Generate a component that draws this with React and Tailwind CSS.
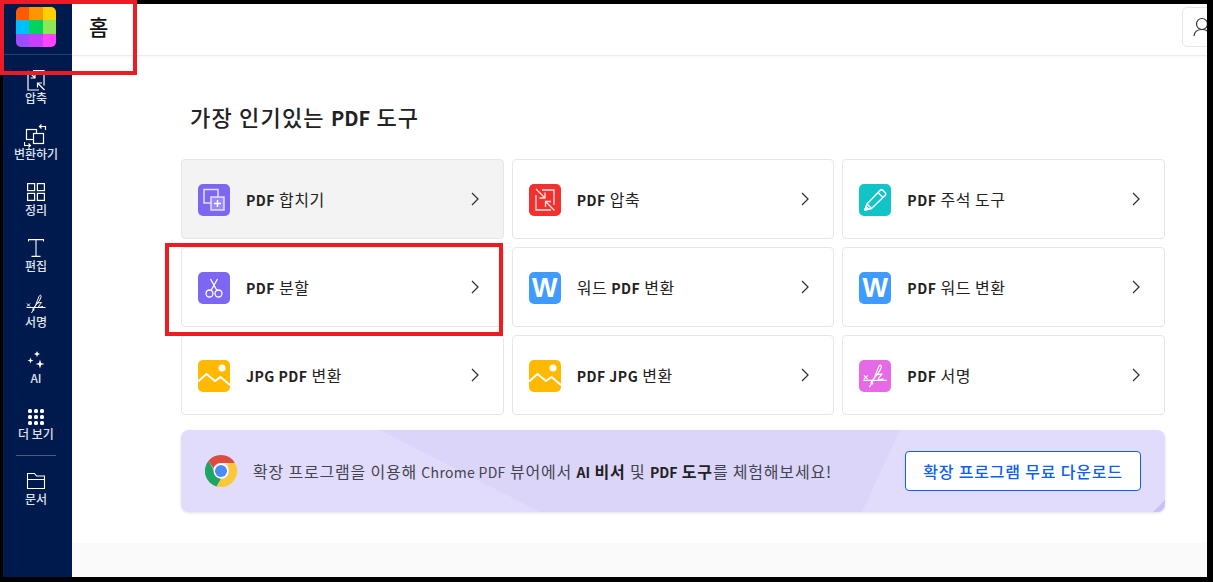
const navItems = [
  { label: "압축", icon: <CompressGlyph /> },
  { label: "변환하기", icon: <ConvertGlyph /> },
  { label: "정리", icon: <OrganizeGlyph /> },
  { label: "편집", icon: <EditGlyph /> },
  { label: "서명", icon: <SignGlyph /> },
  { label: "AI", icon: <SparkleGlyph /> },
  { label: "더 보기", icon: <DotsGlyph /> },
];

const logoColors = [
  "bg-[#ff5a00]", "bg-[#ff9500]", "bg-[#ffd000]",
  "bg-[#00bfff]", "bg-[#00d45f]", "bg-[#8ee655]",
  "bg-[#9b4dff]", "bg-[#c541ff]", "bg-[#ff45ff]",
];

const tools = [
  { title: [["PDF", true], [" 합치기", false]], icon: <MergeIcon />, active: true },
  { title: [["PDF", true], [" 압축", false]], icon: <CompressIcon /> },
  { title: [["PDF", true], [" 주석 도구", false]], icon: <PencilIcon /> },
  { title: [["PDF", true], [" 분할", false]], icon: <ScissorsIcon /> },
  { title: [["워드 ", false], ["PDF", true], [" 변환", false]], icon: <WordIcon /> },
  { title: [["PDF", true], [" 워드 변환", false]], icon: <WordIcon /> },
  { title: [["JPG PDF", true], [" 변환", false]], icon: <ImageIcon /> },
  { title: [["PDF JPG", true], [" 변환", false]], icon: <ImageIcon /> },
  { title: [["PDF", true], [" 서명", false]], icon: <SignIcon /> },
];

function CompressGlyph() {
  return (
    <svg width="24" height="24" viewBox="0 0 24 24" fill="none" stroke="white" strokeWidth="1.2">
      <path d="M9 2.5h11v15M4 7v15h11" />
      <path d="M4 3l7 7M11 5.5V10H6.5M20.5 22l-7-7M13.5 19.5V15H18" />
    </svg>
  );
}

function ConvertGlyph() {
  return (
    <svg width="24" height="26" viewBox="0 0 24 26" fill="none" stroke="white" strokeWidth="1.2">
      <rect x="2.5" y="6.5" width="10" height="10" />
      <rect x="9.5" y="10.5" width="10" height="10" fill="#001a4d" />
      <path d="M21.5 7V3.5H15.5M17.5 1.5l-2 2 2 2M0.5 19v3.5h6M4.5 20.5l2 2-2 2" />
    </svg>
  );
}

function OrganizeGlyph() {
  return (
    <svg width="20" height="20" viewBox="0 0 20 20" fill="none" stroke="white" strokeWidth="1.2">
      <rect x="1.6" y="1.6" width="7" height="7" />
      <rect x="11.4" y="1.6" width="7" height="7" />
      <rect x="1.6" y="11.4" width="7" height="7" />
      <rect x="11.4" y="11.4" width="7" height="7" />
    </svg>
  );
}

function EditGlyph() {
  return (
    <svg width="18" height="20" viewBox="0 0 18 20" fill="none" stroke="white" strokeWidth="1.1">
      <path d="M1.5 3.5V1.6h15v1.9M9 1.6v16.8M4.5 18.4h9" />
    </svg>
  );
}

function SignaturePath({ color }) {
  return (
    <g fill="none" stroke={color} strokeWidth="1">
      <path d="M0.5 13.5h19" />
      <path d="M1 9.5l3 3M4 9.5l-3 3" />
      <path d="M5.5 19C9 14 11 7 13 2.5c1-2 2.5-1.500 2 .5-1 4-5 8-7.500 11-1.500 2-.5 3 1 2" />
      <path d="M10.500 9c1.800 0 3.500-.5 5-.5-1 1.500-3 3.500-3 4.500 1.200.5 3-.3 4.500-.7" />
    </g>
  );
}

function SignGlyph() {
  return (
    <svg width="20" height="20" viewBox="0 0 20 20">
      <SignaturePath color="white" />
    </svg>
  );
}

function SparkleGlyph() {
  return (
    <svg width="18" height="20" viewBox="0 0 18 20" fill="white">
      <path d="M10 1l.9 2.100L13 4l-2.100.9L10 7l-.9-2.100L7 4l2.100-.9zM3.500 7.500l.8 2.200 2.200.8-2.200.8-.8 2.200-.8-2.200L.5 10.500l2.200-.8zM13 9.500l1.100 3.400 3.400 1.100-3.400 1.100L13 18.500l-1.100-3.400L8.500 14l3.400-1.100z" />
    </svg>
  );
}

function DotsGlyph() {
  return (
    <div className="mt-[2px] grid grid-cols-3 gap-[2px]">
      {[...Array(9).keys()].map((n) => (
        <span key={n} className="size-1 rounded-[1.5px] bg-white" />
      ))}
    </div>
  );
}

function FolderGlyph() {
  return (
    <svg width="20" height="18" viewBox="0 0 20 18" fill="none" stroke="white" strokeWidth="1.1">
      <path d="M1.5 16.500V1.500h7l2 2.500h8v12.500zM1.500 7.500h17" />
    </svg>
  );
}

function IconBox({ color, children }) {
  return (
    <div className={`mt-[2px] flex size-8 shrink-0 items-center justify-center overflow-hidden rounded-[5px] ${color}`}>
      {children}
    </div>
  );
}

function MergeIcon() {
  return (
    <IconBox color="bg-[#7c66f2]">
      <svg width="32" height="32" viewBox="0 0 32 32" fill="none" stroke="#e4dffc" strokeWidth="1.500">
        <path d="M13 19H6V5.500h14V13" />
        <rect x="13" y="13" width="13" height="13" fill="#9a89f5" />
        <path d="M19.500 16v7M16 19.500h7" stroke="white" />
      </svg>
    </IconBox>
  );
}

function ScissorsIcon() {
  return (
    <IconBox color="bg-[#7c66f2]">
      <svg width="32" height="32" viewBox="0 0 32 32" fill="none" stroke="white" strokeWidth="1.300">
        <circle cx="11.500" cy="21.500" r="3.500" />
        <circle cx="20.500" cy="21.500" r="3.500" />
        <path d="M13 18.500L19.500 7M19 18.500L12.500 7" />
      </svg>
    </IconBox>
  );
}

function CompressIcon() {
  return (
    <IconBox color="bg-[#f23030]">
      <svg width="32" height="32" viewBox="0 0 32 32" fill="none" stroke="#ffe3e3" strokeWidth="1.300">
        <path d="M13 6h12v15M7 11v15h15" />
        <path d="M7 5l9 9M16 8.500V14h-5.500M25.500 26.500l-9-9M16.500 23v-5.500H22" />
      </svg>
    </IconBox>
  );
}

function PencilIcon() {
  return (
    <IconBox color="bg-[#10c4c8]">
      <svg width="32" height="32" viewBox="0 0 32 32" fill="none" stroke="white" strokeWidth="1.500" strokeLinejoin="round">
        <path d="M6 26l2-6L21 6.500c1-1 2-1 3 0l2 2c1 1 1 2 0 3L12.500 24.500zM8 20l4.500 4.500M19 8.500l4.500 4.500" />
        <path d="M6 26l1-3.500 2.500 2.500z" fill="white" />
      </svg>
    </IconBox>
  );
}

function WordIcon() {
  return (
    <IconBox color="bg-[#3f9bff]">
      <span className="font-['Liberation_Sans',sans-serif] text-[27px] leading-none font-bold text-white">W</span>
    </IconBox>
  );
}

function ImageIcon() {
  return (
    <IconBox color="bg-[#ffb900]">
      <svg width="32" height="32" viewBox="0 0 32 32" fill="none">
        <circle cx="24" cy="8" r="3.500" fill="white" />
        <path d="M0 21.500l8.500-7.500 8.500 7 5.500-4 9.500 8" stroke="white" strokeWidth="2" />
      </svg>
    </IconBox>
  );
}

function SignIcon() {
  return (
    <IconBox color="bg-[#e66ae6]">
      <svg width="32" height="32" viewBox="-3 -3 26 26">
        <SignaturePath color="white" />
      </svg>
    </IconBox>
  );
}

function ChromeIcon() {
  return (
    <svg width="32" height="32" viewBox="0 0 32 32" className="shrink-0">
      <path d="M16 0a16 16 0 0 1 13.860 8H16a8 8 0 0 0-7.600 5.500L3.500 5.800A16 16 0 0 1 16 0z" fill="#db4c3f" />
      <path d="M3.500 5.800l6 11A8 8 0 0 0 16 24l-4.500 7.400A16 16 0 0 1 3.500 5.800z" fill="#1fa463" />
      <path d="M29.860 8A16 16 0 0 1 16 32h-4.500l4.500-8a8 8 0 0 0 7-12 8 8 0 0 0-1-4z" fill="#fdc837" />
      <circle cx="16" cy="16" r="7.500" fill="white" />
      <circle cx="16" cy="16" r="6" fill="#4b8bf5" />
    </svg>
  );
}

function Chevron() {
  return (
    <svg width="10" height="14" viewBox="0 0 10 14" fill="none" stroke="#333" strokeWidth="1.300" className="shrink-0">
      <path d="M2 1l6 6-6 6" />
    </svg>
  );
}

function NavItem({ label, icon }) {
  return (
    <div className="flex h-14 flex-col items-center pt-[14px]">
      <div className="flex h-[22px] items-center justify-center">{icon}</div>
      <span className="text-xs leading-[14px] font-medium text-[#dfe3ee]">{label}</span>
    </div>
  );
}

function ToolCard({ title, icon, active }) {
  return (
    <div
      className={`flex h-20 items-center rounded-[4px] border border-[#e6e6e6] pr-[23px] pl-4 ${active ? "bg-[#f3f3f3]" : "bg-white"}`}
    >
      {icon}
      <span className="ml-4 flex-1 text-base tracking-[0.5px] whitespace-pre text-[#222]">
        {title.map(([text, bold]) => (
          <span key={text} className={bold ? "text-sm font-bold" : "font-normal"}>
            {text}
          </span>
        ))}
      </span>
      <Chevron />
    </div>
  );
}

const App = () => {
  return (
    <div className="relative h-[582px] w-[1213px] overflow-hidden bg-black pt-1 pr-[6px] pb-[5px] pl-[3px] font-['Noto_Sans_CJK_KR',sans-serif]">
      <div className="flex h-full">
        <aside className="flex w-[69px] shrink-0 flex-col bg-[#001a4d] pr-[3px]">
          <div className="-mr-[3px] flex h-[51px] shrink-0 justify-center border-b border-[#2a3f6e] pt-[3px] pr-[3px]">
            <div className="grid size-10 grid-cols-3 overflow-hidden rounded-[5px]">
              {logoColors.map((color) => (
                <span key={color} className={color} />
              ))}
            </div>
          </div>
          {navItems.map((item) => (
            <NavItem key={item.label} label={item.label} icon={item.icon} />
          ))}
          <div className="mx-auto mt-2 h-px w-10 shrink-0 bg-[#4a5c85]" />
          <NavItem label="문서" icon={<FolderGlyph />} />
        </aside>

        <main className="flex min-w-0 flex-1 flex-col overflow-hidden bg-white">
          <header className="flex h-[52px] shrink-0 items-start justify-between border-b border-[#ececec] pl-[17px] shadow-[0_1px_2px_rgba(0,0,0,0.03)]">
            <h1 className="mt-2 text-[21px] leading-7 font-medium text-[#111]">홈</h1>
            <button className="-mr-[15px] mt-[3px] flex size-10 shrink-0 items-center justify-center rounded-[5px] border border-[#e6e6e6]">
              <svg width="20" height="20" viewBox="0 0 20 20" fill="none" stroke="#333" strokeWidth="1.200">
                <circle cx="10" cy="7" r="5.500" />
                <path d="M2 19c.5-4.500 3.500-6.500 8-6.500s7.500 2 8 6.500" />
              </svg>
            </button>
          </header>

          <div className="flex-1 pr-[42px] pl-[109px]">
            <h2 className="mt-[43px] pl-[9px] text-[22px] leading-[34px] font-medium tracking-[1.2px] text-[#222]">
              가장 인기있는 <span className="text-xl font-bold tracking-normal">PDF</span> 도구
            </h2>
            <div className="mt-[26px] grid grid-cols-3 gap-2">
              {tools.map((tool, i) => (
                <ToolCard key={i} title={tool.title} icon={tool.icon} active={tool.active} />
              ))}
            </div>

            <div className="relative mt-[15px] flex h-[82px] items-center overflow-hidden rounded-lg bg-[#e1dcfb] pr-6 pl-6 shadow-[0_1px_3px_rgba(0,0,0,0.12)]">
              <div className="absolute inset-0 bg-[#dbd5fa] [clip-path:polygon(199px_0,719px_0,681px_100%,359px_100%)]" />
              <div className="absolute right-0 bottom-0 size-3 bg-[#c9c0f5] [clip-path:polygon(100%_0,100%_100%,0_100%)]" />
              <div className="relative"><ChromeIcon /></div>
              <p className="relative ml-4 flex-1 text-base tracking-[0.8px] whitespace-nowrap text-[#44444f]">
                확장 프로그램을 이용해 <span className="text-sm tracking-[0.3px]">Chrome PDF</span> 뷰어에서{" "}
                <b className="text-[#222]"><span className="text-sm tracking-normal">AI</span> 비서</b> 및{" "}
                <b className="text-[#222]"><span className="text-sm tracking-normal">PDF</span> 도구</b>를 체험해보세요!
              </p>
              <button className="relative h-10 w-[236px] shrink-0 rounded-[4px] border border-[#0d5ef4] bg-white text-base font-medium tracking-[0.8px] text-[#0d5ef4]">
                확장 프로그램 무료 다운로드
              </button>
            </div>
          </div>

          <div className="h-[34px] shrink-0 bg-[#fafafa]" />
        </main>
      </div>

      <div className="absolute top-0 left-0 h-[75px] w-[137px] border-[4px] border-[#ed1c24]" />
      <div className="absolute top-[243px] left-[165px] h-[93px] w-[338px] border-[4px] border-[#ed1c24]" />
    </div>
  );
};

export default App;
